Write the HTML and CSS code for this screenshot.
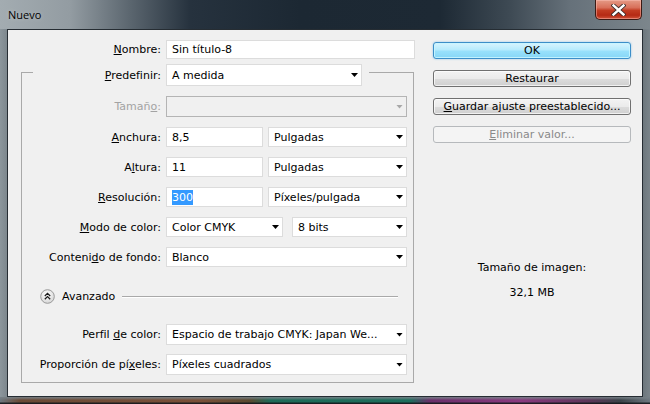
FILE: index.html
```html
<!DOCTYPE html>
<html lang="es">
<head>
<meta charset="utf-8">
<title>Nuevo</title>
<link rel="stylesheet" href="styles.css">
</head>
<body>
<div class="window">
  <div class="titlebar">
    <span class="title">Nuevo</span>
    <div class="close">
      <svg width="15" height="12" viewBox="0 0 15 12">
        <path d="M2.5 1.5 L12.5 10.5 M12.5 1.5 L2.5 10.5" stroke="#3a2a28" stroke-width="4.2" stroke-linecap="square"/>
        <path d="M2.5 1.5 L12.5 10.5 M12.5 1.5 L2.5 10.5" stroke="#ffffff" stroke-width="2.4" stroke-linecap="square"/>
      </svg>
    </div>
  </div>
  <div class="client">
    <div class="form">
      <div class="row name-row">
        <span class="lbl lbl-name"><u>N</u>ombre:</span>
        <div class="field name-field">Sin título-8</div>
      </div>
      <div class="group">
        <div class="legend">
          <span class="lbl lbl-legend"><u>P</u>redefinir:</span>
          <div class="field select legend-select">A medida</div>
        </div>
        <div class="row row-tam">
          <span class="lbl disabled">Tamañ<u>o</u>:</span>
          <div class="field select full off"></div>
        </div>
        <div class="row">
          <span class="lbl"><u>A</u>nchura:</span>
          <div class="field num">8,5</div>
          <div class="field select unit">Pulgadas</div>
        </div>
        <div class="row">
          <span class="lbl">A<u>l</u>tura:</span>
          <div class="field num">11</div>
          <div class="field select unit">Pulgadas</div>
        </div>
        <div class="row">
          <span class="lbl"><u>R</u>esolución:</span>
          <div class="field num"><span class="sel">300</span></div>
          <div class="field select unit">Píxeles/pulgada</div>
        </div>
        <div class="row row-mode">
          <span class="lbl"><u>M</u>odo de color:</span>
          <div class="field select mode">Color CMYK</div>
          <div class="field select bits">8 bits</div>
        </div>
        <div class="row">
          <span class="lbl">Conteni<u>d</u>o de fondo:</span>
          <div class="field select full">Blanco</div>
        </div>
        <div class="advanced">
          <span class="adv-icon">
            <svg width="15" height="15" viewBox="0 0 15 15">
              <defs>
                <radialGradient id="g" cx="45%" cy="35%" r="65%">
                  <stop offset="0" stop-color="#ffffff"/>
                  <stop offset="1" stop-color="#d6d6d6"/>
                </radialGradient>
              </defs>
              <circle cx="7.5" cy="7.5" r="6.8" fill="url(#g)" stroke="#9a9a9a" stroke-width="1"/>
              <path d="M4.8 7 L7.5 4.4 L10.2 7 M4.8 10.2 L7.5 7.6 L10.2 10.2" fill="none" stroke="#1a1a1a" stroke-width="1.3"/>
            </svg>
          </span>
          <span class="adv-text">Avanzado</span>
          <span class="adv-line"></span>
        </div>
        <div class="row row-profile">
          <span class="lbl">Perfil <u>d</u>e color:</span>
          <div class="field select full">Espacio de trabajo CMYK: Japan We...</div>
        </div>
        <div class="row row-aspect">
          <span class="lbl">Proporción de pí<u>x</u>eles:</span>
          <div class="field select full">Píxeles cuadrados</div>
        </div>
      </div>
    </div>
    <div class="side">
      <div class="btn btn-ok">OK</div>
      <div class="btn">Restaurar</div>
      <div class="btn"><u>G</u>uardar ajuste preestablecido...</div>
      <div class="btn btn-off"><u>E</u>liminar valor...</div>
      <div class="info">
        <div class="info-line">Tamaño de imagen:</div>
        <div class="info-line info-value">32,1 MB</div>
      </div>
    </div>
  </div>
  <div class="bottomframe"></div>
</div>
</body>
</html>
```
FILE: styles.css
```css
* { box-sizing: border-box; margin: 0; padding: 0; }
html, body { width: 650px; height: 404px; overflow: hidden; }
body {
  font-family: "DejaVu Sans", Tahoma, sans-serif;
  font-size: 11px;
  color: #000;
  background: #2b3540;
}
u { text-decoration: underline; text-underline-offset: 1px; }

.window {
  width: 650px;
  height: 404px;
  display: flex;
  flex-direction: column;
  background: linear-gradient(to right, #8c969c 0, #7d878d 7px, #4a5560 50%, #6d777d 643px, #7a848a 650px);
}

.titlebar {
  height: 29px;
  display: flex;
  align-items: flex-start;
  background: linear-gradient(to right, #a3acb1 0, #939ca2 70px, #5b666f 130px, #26323e 190px, #1c2833 300px, #1d2934 440px, #3e4a54 510px, #66717a 570px, #7c868c 650px);
}
.title {
  padding-left: 8px;
  line-height: 30px;
  font-family: "Open Sans", "DejaVu Sans", sans-serif;
  font-size: 11px;
  color: #000;
  text-shadow: 0 0 4px rgba(255,255,255,0.35);
}
.close {
  margin-left: auto;
  margin-right: 8px;
  width: 47px;
  height: 20px;
  border: 1px solid #3c1a14;
  border-top: none;
  border-radius: 0 0 5px 5px;
  background: linear-gradient(to bottom, #e59a86 0, #d8705a 40%, #c23c22 55%, #b52a14 80%, #d0533a 100%);
  box-shadow: inset 0 0 0 1px rgba(255,200,190,0.45);
  display: flex;
  align-items: center;
  justify-content: center;
}

.client {
  height: 368px;
  margin: 0 7px;
  border: 1px solid #262d33;
  background: #f0f0f0;
  display: flex;
}

.form {
  width: 408px;
  padding-top: 10px;
}

.row {
  display: flex;
  align-items: center;
  gap: 5px;
  margin-top: 10px;
}
.name-row { margin-top: 0; }

.lbl {
  width: 139px;
  text-align: right;
  white-space: nowrap;
  flex: none;
}
.lbl-name { width: 153px; }
.lbl-legend { width: 128px; }
.disabled { color: #a3a3a3; }

.field {
  height: 20px;
  background: #fff;
  border: 1px solid #dcdcdc;
  padding-left: 5px;
  display: flex;
  align-items: center;
  white-space: nowrap;
  flex: none;
}
.name-field { width: 249px; height: 19px; }
.select { padding-right: 3px; }
.select::after {
  content: "";
  margin-left: auto;
  width: 7px;
  height: 4px;
  background: #000;
  clip-path: polygon(0 0, 100% 0, 50% 100%);
  flex: none;
}
.off {
  background: #f0f0f0;
  border-color: #b4b4b4;
}
.off::after { background: #a8a8a8; }

.full { width: 241px; }
.num { width: 97px; }
.unit { width: 139px; }
.mode { width: 117px; }
.bits { width: 115px; }
.row-mode { gap: 9px; }
.row-mode .lbl { margin-right: -4px; }

.sel {
  background: #3399ff;
  color: #fff;
  line-height: 15px;
}

.group {
  margin: 13px 0 0 13px;
  width: 393px;
  border: 1px solid #a9a9a9;
  padding: 0 6px 7px 0;
}
.legend {
  margin: -9px 0 0 11px;
  width: fit-content;
  display: flex;
  align-items: center;
  gap: 5px;
  padding-right: 7px;
  background: #f0f0f0;
}
.legend-select { width: 196px; height: 22px; }
.row-tam .field { height: 21px; }

.advanced {
  margin-top: 21px;
  height: 16px;
  display: flex;
  align-items: center;
  padding-left: 18px;
}
.adv-icon { width: 15px; height: 15px; display: block; }
.adv-icon svg { display: block; }
.adv-text { margin-left: 7px; }
.adv-line {
  flex: 1;
  margin: 1px 9px 0 7px;
  height: 2px;
  border-top: 1px solid #a9a9a9;
  border-bottom: 1px solid #ffffff;
}
.row-profile { margin-top: 20px; }
.row-profile .field, .row-aspect .field { height: 21px; }
.row-aspect { margin-top: 9px; }

.side {
  width: 198px;
  margin-left: 17px;
  padding-top: 12px;
}
.btn {
  height: 17px;
  margin-bottom: 11px;
  border: 1px solid #707070;
  border-radius: 3px;
  background: linear-gradient(to bottom, #f3f3f3 0, #ebebeb 50%, #dddddd 51%, #cfcfcf 100%);
  box-shadow: inset 0 0 0 1px rgba(255,255,255,0.7);
  text-align: center;
  line-height: 15px;
  white-space: nowrap;
}
.btn-ok {
  border-color: #3c8ec8;
  background: linear-gradient(to bottom, #d8f4fe 0, #b6ebfd 45%, #98e0fb 55%, #86d7f7 100%);
  box-shadow: inset 0 0 0 1px rgba(200,245,255,0.9), 0 0 2px rgba(60,160,230,0.6);
}
.btn-off {
  border-color: #b6b9bc;
  background: #f4f4f4;
  box-shadow: none;
  color: #8a8a8a;
}

.info {
  margin-top: 118px;
  text-align: center;
}
.info-line { line-height: 13px; }
.info-value { margin-top: 12px; }

.bottomframe {
  flex: 1;
  background:
    linear-gradient(to bottom, rgba(120,130,136,0.9) 0, rgba(120,130,136,0.4) 2px, rgba(0,0,0,0) 3px, rgba(0,0,0,0) 5px, rgba(20,24,28,0.9) 6px),
    linear-gradient(to right, #6e7880 0, #6a4a36 20px, #7a5038 200px, #5a4a30 250px, #1f6a58 270px, #1c6e5c 410px, #6a2f6a 430px, #8a3a80 520px, #5a3658 590px, #3a4248 620px, #6e7880 650px);
}
```
